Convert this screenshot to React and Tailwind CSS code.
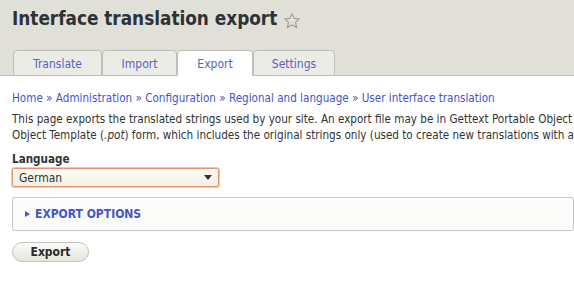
import { useState } from "react";

const tabs = [
  { label: "Translate", w: "w-[89px]" },
  { label: "Import", w: "w-[75px]" },
  { label: "Export", w: "w-[76px]" },
  { label: "Settings", w: "w-[82px]" },
];
const crumbs = ["Home", "Administration", "Configuration", "Regional and language", "User interface translation"];

function StarIcon() {
  return (
    <svg width="18" height="18" viewBox="0 0 20 20" className="ml-[6px] mt-[3px]">
      <path
        d="M10 1.8l2.4 5.3 5.8.6-4.3 3.9 1.2 5.7L10 14.4l-5.1 2.9 1.2-5.7-4.3-3.9 5.8-.6z"
        fill="none"
        stroke="#9a9a90"
        strokeWidth="1.2"
        strokeLinejoin="round"
      />
    </svg>
  );
}

export default function App() {
  const [active] = useState("Export");

  return (
    <div className="w-[574px] h-[291px] overflow-hidden bg-white text-[#333] font-['DejaVu_Sans_Condensed','DejaVu_Sans',sans-serif] font-stretch-semi-condensed">
      <div className="bg-[#e0e0d8] border-b border-[#bebfb9] pt-[8px] px-[12px]">
        <div className="flex items-center h-[22px]">
          <h1 className="text-[18.8px] font-bold text-[#2e3237] leading-none">
            Interface translation export
          </h1>
          <StarIcon />
        </div>
        <div className="flex mt-[20px] ml-[1px] -mb-px">
          {tabs.map(t => (
            <div
              key={t.label}
              className={`${t.w} h-[26px] pt-px flex items-center justify-center text-[12px] text-[#5463c8] rounded-t-[4px] border border-[#bebfb9] ${
                t.label === active ? "bg-white border-b-white" : "bg-[#ecece6]"
              }`}
            >
              {t.label}
            </div>
          ))}
        </div>
      </div>

      <div className="px-[12px] pt-[15px]">
        <div className="text-[11.6px] text-[#4456c6] leading-[14px] whitespace-nowrap">
          {crumbs.map((c, i) => (
            <span key={c}>
              {i > 0 && <span> » </span>}
              {c}
            </span>
          ))}
        </div>
        <p className="mt-[6px] text-[11.6px] leading-[16px] text-[#333] whitespace-nowrap">
          This page exports the translated strings used by your site. An export file may be in Gettext Portable Object (<i>.po</i>) form, which includes both
          <br />
          Object Template (<i>.pot</i>) form, which includes the original strings only (used to create new translations with a Gettext translation editor).
        </p>

        <div className="mt-[9px]">
          <div className="text-[11.6px] font-bold text-[#333] leading-[15px]">Language</div>
          <div className="mt-[1px] w-[207px] h-[19px] border border-[#e5936f] rounded-[2px] shadow-[0_0_0_1px_#f3c7b3] bg-gradient-to-b from-[#fbfcf6] to-[#eef2e2] flex items-center justify-between pl-[6px] pr-[6px]">
            <span className="text-[12px] text-[#333]">German</span>
            <svg width="8" height="5" viewBox="0 0 8 5"><path d="M0 0h8L4 5z" fill="#333" /></svg>
          </div>
        </div>

        <div className="mt-[10px] -mr-[12px] h-[34px] border border-[#c8c8c8] rounded-[2px] bg-[#fbfbfa] flex items-center pl-[12px]">
          <svg width="5" height="6" viewBox="0 0 5 6" className="mr-[5px]"><path d="M0 0l5 3L0 6z" fill="#4456c6" /></svg>
          <span className="text-[12px] font-bold text-[#4456c6] uppercase">Export options</span>
        </div>

        <button className="mt-[11px] h-[20px] w-[77px] rounded-full border border-[#c4c4bc] bg-gradient-to-b from-[#fbfbf8] to-[#e6e6de] text-[12px] font-bold text-[#2e2a28] flex items-center justify-center">
          Export
        </button>
      </div>
    </div>
  );
}
